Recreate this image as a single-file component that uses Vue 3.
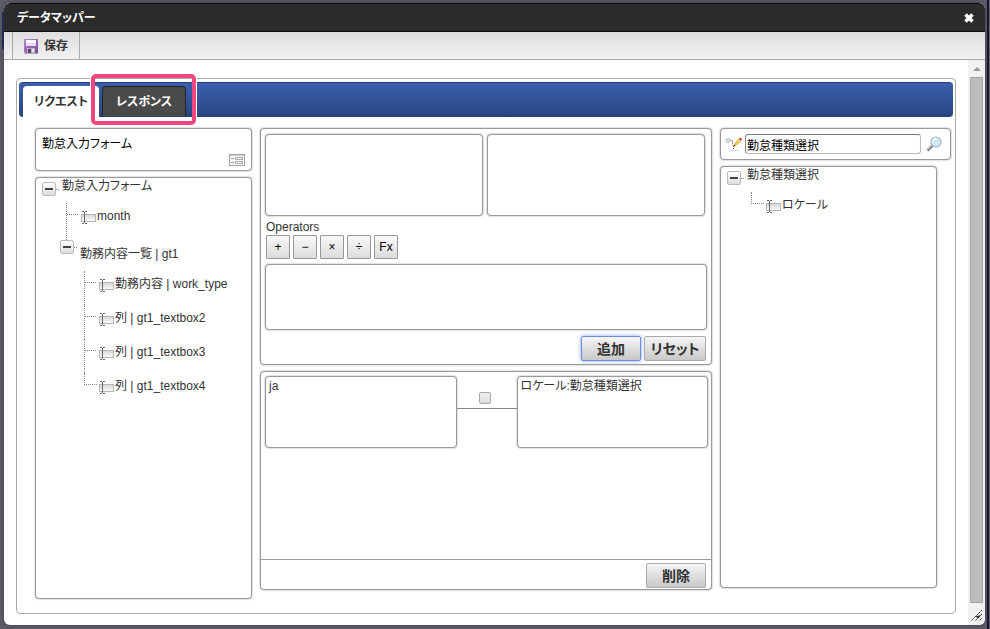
<script setup>
import { ref } from 'vue'

const activeTab = ref('request')
const formName = '勤怠入力フォーム'
const search = ref('勤怠種類選択')
const selected = ref(false)
const operators = ['+', '−', '×', '÷', 'Fx']

const trees = {
  source: {
    label: '勤怠入力フォーム',
    children: [
      { label: 'month' },
      {
        label: '勤務内容一覧 | gt1',
        children: [
          { label: '勤務内容 | work_type' },
          { label: '列 | gt1_textbox2' },
          { label: '列 | gt1_textbox3' },
          { label: '列 | gt1_textbox4' },
        ],
      },
    ],
  },
  target: { label: '勤怠種類選択', children: [{ label: 'ロケール' }] },
}
</script>

<template>
  <div class="backdrop">
    <svg class="defs" width="0" height="0" aria-hidden="true">
      <defs>
        <linearGradient id="field-fill" x1="0" y1="0" x2="0" y2="1">
          <stop offset="0" stop-color="#d4d4d4" />
          <stop offset="1" stop-color="#fdfdfd" />
        </linearGradient>
        <linearGradient id="disk-fill" x1="0" y1="0" x2="1" y2="1">
          <stop offset="0" stop-color="#b98ad0" />
          <stop offset="1" stop-color="#7a459a" />
        </linearGradient>
        <symbol id="field" viewBox="0 0 16 14">
          <rect x="1.5" y="4.5" width="14" height="7" fill="url(#field-fill)" stroke="#b5b5b5" />
          <path d="M2 1.500h2M5 1.500h2M4.500 2v11M2 13.500h2M5 13.500h2" fill="none" stroke="#666" />
        </symbol>
      </defs>
    </svg>

    <section class="dialog">
      <header class="titlebar">
        <h1>データマッパー</h1>
        <button class="close" aria-label="閉じる">
          <svg width="10" height="10" viewBox="0 0 10 10">
            <path d="M1.500 1.500l7 7M8.500 1.500l-7 7" stroke="#fff" stroke-width="3.600" />
          </svg>
        </button>
      </header>

      <div class="toolbar">
        <button class="save">
          <svg width="16" height="16" viewBox="0 0 16 16">
            <path d="M1 1h14v14H2.500L1 13.500z" fill="url(#disk-fill)" />
            <path d="M3 2h10v6H3z" fill="#fbf9fd" />
            <path d="M3 5h10v3H3z" fill="#e6dcee" />
            <path d="M4 10h8v5H4z" fill="#b9b4c4" />
            <path d="M5 11h3v4H5z" fill="#5d3c78" />
            <path d="M9 11h2v3H9z" fill="#e8e6ee" />
            <path d="M1 15.500h14" stroke="#aaa" />
          </svg>
          <span>保存</span>
        </button>
      </div>

      <div class="body">
        <main class="content">
          <div class="tab-panel">
            <nav class="tabs" role="tablist">
              <button
                class="tab" :class="{ active: activeTab === 'request' }" role="tab"
                @click="activeTab = 'request'"
              >リクエスト</button>
              <button
                class="tab marked" :class="{ active: activeTab === 'response' }" role="tab"
                @click="activeTab = 'response'"
              >レスポンス</button>
            </nav>

            <div class="columns">
              <div class="column side">
                <div class="box form-name">
                  <span>{{ formName }}</span>
                  <svg width="16" height="12" viewBox="0 0 16 12">
                    <rect x=".5" y=".5" width="15" height="11" fill="#f6f6f6" stroke="#a3a3a3" />
                    <path d="M1 1.500h14" stroke="#ccc" />
                    <path d="M2 4.500h3M2 8.500h3" stroke="#999" />
                    <rect x="6.500" y="3.500" width="7" height="2" fill="#fff" stroke="#aaa" />
                    <rect x="6.500" y="7.500" width="7" height="2" fill="#fff" stroke="#aaa" />
                  </svg>
                </div>
                <div class="box tree">
                  <div class="root">
                    <button class="toggle" aria-label="折りたたむ"></button>
                    <span>{{ trees.source.label }}</span>
                  </div>
                  <ul class="level">
                    <template v-for="node in trees.source.children" :key="node.label">
                      <li v-if="node.children" class="group">
                        <div class="group-head">
                          <button class="toggle" aria-label="折りたたむ"></button>
                          <span>{{ node.label }}</span>
                        </div>
                        <ul class="level inner">
                          <li v-for="leaf in node.children" :key="leaf.label" class="leaf">
                            <i class="branch"></i>
                            <svg class="field" width="16" height="14"><use href="#field" /></svg>
                            <span>{{ leaf.label }}</span>
                          </li>
                        </ul>
                      </li>
                      <li v-else class="leaf before-group">
                        <i class="branch"></i>
                        <svg class="field" width="16" height="14"><use href="#field" /></svg>
                        <span>{{ node.label }}</span>
                      </li>
                    </template>
                  </ul>
                </div>
              </div>

              <div class="column center">
                <div class="box builder">
                  <div class="operands">
                    <div class="box operand"></div>
                    <div class="box operand"></div>
                  </div>
                  <div class="operators-label">Operators</div>
                  <div class="operators">
                    <button v-for="op in operators" :key="op" class="op">{{ op }}</button>
                  </div>
                  <div class="box formula"></div>
                  <div class="actions">
                    <button class="btn focused">追加</button>
                    <button class="btn wide">リセット</button>
                  </div>
                </div>
                <div class="box mappings">
                  <div class="mapping">
                    <div class="box cell">ja</div>
                    <label class="link">
                      <input v-model="selected" type="checkbox" aria-label="マッピング">
                    </label>
                    <div class="box cell">ロケール:勤怠種類選択</div>
                  </div>
                  <div class="footer">
                    <button class="btn">削除</button>
                  </div>
                </div>
              </div>

              <div class="column right">
                <div class="box search">
                  <svg width="18" height="16" viewBox="0 0 18 16">
                    <circle cx="3" cy="4.500" r="1.800" fill="#f2f2f2" stroke="#aaa" />
                    <path d="M5 4.500h2.500v4l1 1" fill="none" stroke="#aaa" />
                    <path d="M8.500 10v5" stroke="#555" stroke-dasharray="1 1" />
                    <path d="M4 14.500h9" stroke="#ddd" />
                    <path d="M9 10l.7-2.400 4.600-5 1.900 1.700-4.700 4.900z" fill="#f7cf45" stroke="#b98a2c" stroke-width=".5" />
                    <path d="M14 2.800L15.300 1.500l1.900 1.800-1.300 1.300z" fill="#e2364e" />
                    <path d="M8.600 10.400l.6-1.800 1.200 1.100z" fill="#333" />
                  </svg>
                  <input v-model="search" type="text" aria-label="検索">
                  <button class="find" aria-label="検索する">
                    <svg width="16" height="16" viewBox="0 0 16 16">
                      <path d="M1.500 14.500l5-5" stroke="#8b8b8b" stroke-width="3" />
                      <path d="M1.500 13.500l4.500-4.500" stroke="#c9c9c9" />
                      <circle cx="10" cy="6" r="5" fill="#d4e9f8" stroke="#a9b5c4" stroke-width="1.200" />
                      <path d="M6.500 6a3.500 3.500 0 0 1 3.500-3.500" fill="none" stroke="#fff" stroke-width="1.500" />
                    </svg>
                  </button>
                </div>
                <div class="box tree target">
                  <div class="root">
                    <button class="toggle" aria-label="折りたたむ"></button>
                    <span>{{ trees.target.label }}</span>
                  </div>
                  <ul class="level">
                    <li v-for="leaf in trees.target.children" :key="leaf.label" class="leaf">
                      <i class="branch"></i>
                      <svg class="field" width="16" height="14"><use href="#field" /></svg>
                      <span>{{ leaf.label }}</span>
                    </li>
                  </ul>
                </div>
              </div>
            </div>
          </div>
        </main>

        <div class="scrollbar" aria-hidden="true">
          <svg width="8" height="4" viewBox="0 0 8 4"><path d="M0 4l4-4 4 4z" fill="#999" /></svg>
          <div class="thumb"></div>
          <svg class="grip" width="12" height="12" viewBox="0 0 12 12">
            <path d="M.5 11.500l10.500-10.500M4.500 11.500l6.500-6.500M8.500 11.500l2.500-2.500" stroke="#333" stroke-dasharray="2 .6" />
            <path d="M4 7.500l6-1.500-2.500 3.500z" fill="#333" />
          </svg>
        </div>
      </div>
    </section>
  </div>
</template>

<style>
body {
  background: #5c5c62;
}
</style>

<style scoped>
* {
  box-sizing: border-box;
}
.backdrop {
  display: flex;
  min-height: 100vh;
  padding: 3px 5px 4px 4px;
  background:
    linear-gradient(#1b2350, #1b2350) 2px 12px / 2px 37px no-repeat,
    linear-gradient(90deg, #5c5c62 calc(100% - 3px), #15122f calc(100% - 3px), #15122f calc(100% - 1px), #66666c calc(100% - 1px));
  font: 12px/16px "Liberation Sans", "Noto Sans CJK JP", sans-serif;
  font-feature-settings: "palt";
  color: #333;
}
.defs {
  position: absolute;
}
button,
input {
  font: inherit;
  font-feature-settings: inherit;
  color: inherit;
  margin: 0;
  padding: 0;
}
button {
  border: 0;
  background: none;
}
svg {
  display: block;
  flex: none;
}
.dialog {
  flex: 1;
  display: flex;
  flex-direction: column;
  background: #fff;
  border-radius: 6px;
  overflow: hidden;
  box-shadow: 0 0 4px #3c3c60;
}
.titlebar {
  display: flex;
  align-items: center;
  justify-content: space-between;
  height: 29px;
  padding: 0 11px 0 13px;
  background: #2b2b2b;
  border: solid #0c0c0c;
  border-width: 1px 0;
  border-radius: 6px 6px 0 0;
}
h1 {
  margin: 0;
  font-size: 12px;
  color: #fff;
}
.toolbar {
  display: flex;
  height: 28px;
  padding-left: 8px;
  background: linear-gradient(#dedede, #f1f1f1);
  border-bottom: 1px solid #aaa;
}
.save {
  display: flex;
  align-items: center;
  gap: 5px;
  padding: 0 11px 0 10px;
  border: solid #aaa;
  border-width: 0 1px;
  font-weight: bold;
}
.body {
  flex: 1;
  display: flex;
}
.content {
  flex: 1;
  display: flex;
  padding: 18px 12px 11px;
}
.tab-panel {
  flex: 1;
  padding: 3px 2px;
  border: 1px solid #aaa;
  border-radius: 4px;
}
.tabs {
  display: flex;
  align-items: flex-end;
  gap: 3px;
  height: 35px;
  padding: 4px 4px 0;
  border-radius: 4px;
  background: linear-gradient(#3a60ae, #28457f);
  border-top: 1px solid #24407a;
  border-bottom: 1px solid #24407a;
}
.tab {
  position: relative;
  width: 84px;
  height: 30px;
  border: 1px solid #222;
  border-bottom: 0;
  border-radius: 4px 4px 0 0;
  background: #4a4a4a;
  color: #fff;
  font-weight: bold;
  white-space: nowrap;
}
.tab.active {
  width: 76px;
  height: 31px;
  margin-bottom: -1px;
  border-color: #fff;
  background: #fff;
  color: #333;
}
.marked::after {
  content: "";
  position: absolute;
  inset: -13px -11px -9px -12px;
  border: 4px solid #f0457f;
  border-radius: 5px;
  box-shadow: 0 0 0 1px #fff;
}
.columns {
  display: flex;
  gap: 8px;
  padding: 11px 2px 0 16px;
}
.column {
  display: flex;
  flex-direction: column;
  gap: 6px;
}
.side {
  width: 217px;
}
.center {
  flex: 1;
}
.right {
  width: 231px;
}
.box {
  border: 1px solid #999;
  border-radius: 4px;
  background: #fff;
  box-shadow: 0 0 2px #999;
}
.form-name {
  display: flex;
  justify-content: space-between;
  height: 43px;
  padding: 7px 6px 4px;
  color: #000;
}
.form-name svg {
  align-self: flex-end;
}
.tree {
  min-height: 422px;
}
.target {
  width: 217px;
}
.root {
  display: flex;
  gap: 6px;
  height: 25px;
  padding-left: 6px;
}
.root .toggle {
  margin-top: 4px;
}
.toggle {
  position: relative;
  flex: none;
  width: 14px;
  height: 14px;
  border: 1px solid #bbb;
  border-radius: 2px;
  background: linear-gradient(#fff, #ddd);
}
.toggle::before {
  content: "";
  position: absolute;
  inset: 5px 2px;
  background: #444;
}
.toggle::after {
  content: "";
  position: absolute;
  left: 13px;
  top: 6px;
  width: 3px;
  border-top: 1px dotted #888;
}
ul {
  margin: 0;
  padding: 0;
  list-style: none;
}
.level {
  padding-left: 30px;
}
.leaf {
  display: flex;
  height: 34px;
  line-height: 26px;
}
.before-group {
  height: 37px;
}
.branch {
  width: 14px;
  border-left: 1px dotted #888;
}
.branch::before {
  content: "";
  display: block;
  width: 11px;
  height: 11px;
  border-bottom: 1px dotted #888;
}
.leaf:last-child .branch {
  border-left: 0;
}
.leaf:last-child .branch::before {
  width: 12px;
  border-left: 1px dotted #888;
}
.field {
  margin: 7px 1px 0 0;
}
.group {
  margin-left: -6px;
}
.group-head {
  display: flex;
  gap: 6px;
  height: 31px;
  line-height: 28px;
}
.inner {
  padding-left: 24px;
}
.builder {
  height: 237px;
  padding: 5px 4px;
}
.operands {
  display: flex;
  gap: 4px;
  padding-right: 2px;
}
.operand {
  flex: 1;
  height: 82px;
}
.operators-label {
  padding: 3px 1px 0;
}
.operators {
  display: flex;
  gap: 3px;
  padding: 0 1px 5px;
}
.op {
  width: 24px;
  height: 24px;
  border: 1px solid #999;
  border-radius: 1px;
  background: linear-gradient(#f8f8f8, #ddd);
  color: #000;
}
.formula {
  height: 66px;
}
.actions {
  display: flex;
  justify-content: flex-end;
  gap: 3px;
  padding: 6px 1px 0;
}
.btn {
  width: 60px;
  height: 25px;
  border: 1px solid #aaa;
  border-radius: 2px;
  background: linear-gradient(#f6f6f6, #c8c8c8);
  font-size: 14px;
  font-weight: bold;
}
.wide {
  width: 62px;
}
.focused {
  border-color: #6b8be0;
  box-shadow: 0 0 4px #8aa5ee;
}
.mappings {
  display: flex;
  flex-direction: column;
  justify-content: space-between;
  height: 219px;
}
.mapping {
  display: flex;
  padding: 4px 3px 0 4px;
}
.cell {
  flex: 1;
  height: 72px;
  padding: 1px 3px;
}
.link {
  display: flex;
  justify-content: center;
  align-items: flex-end;
  width: 60px;
  height: 33px;
  padding: 0 4px 4px 0;
  border-bottom: 1px solid #888;
}
.link input {
  appearance: none;
  width: 12px;
  height: 12px;
  border: 1px solid #aaa;
  border-radius: 2px;
  background: linear-gradient(#eee, #ddd);
}
.link input:checked {
  background: #6b8be0;
}
.footer {
  display: flex;
  justify-content: flex-end;
  padding: 3px 5px 1px;
  border-top: 1px solid #999;
}
.search {
  display: flex;
  align-items: center;
  gap: 2px;
  height: 32px;
  padding: 0 8px 0 4px;
}
.search input {
  flex: 1;
  min-width: 0;
  height: 20px;
  padding: 0 1px;
  border: 1px solid #bbb;
  border-top-color: #777;
  border-left-color: #888;
  border-radius: 3px;
  color: #000;
}
.find {
  margin-left: 3px;
}
.scrollbar {
  display: flex;
  flex-direction: column;
  align-items: center;
  width: 17px;
  padding: 7px 2px 4px;
  background: #f1f1f1;
}
.thumb {
  flex: 1;
  width: 13px;
  margin: 6px 0;
  border: 1px solid #a8a8a8;
  background: #bcbcbc;
}
</style>
